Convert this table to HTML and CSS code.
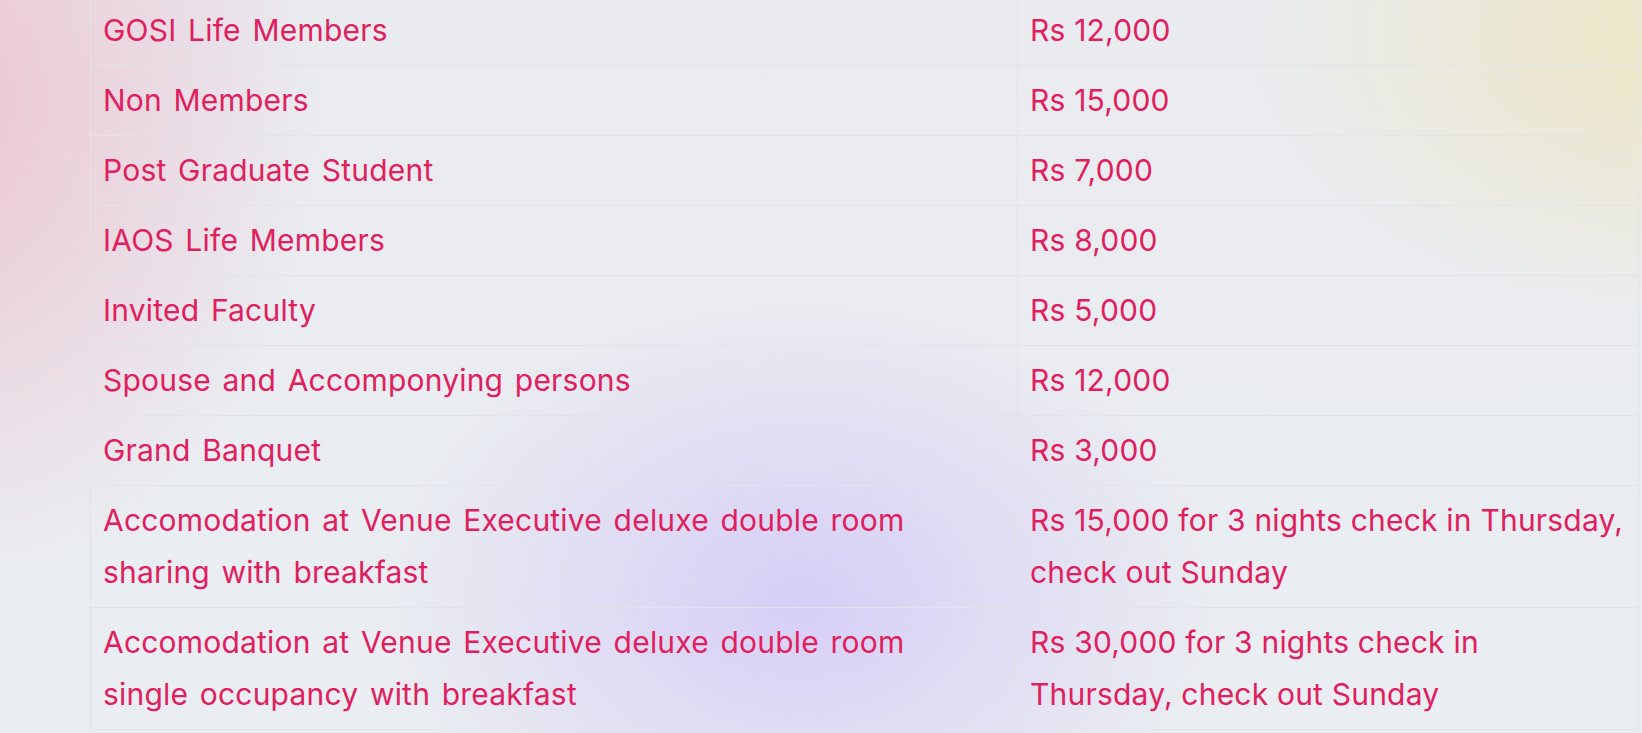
FILE: index.html
```html
<!DOCTYPE html>
<html lang="en">
<head>
<meta charset="utf-8">
<title>Registration Fees</title>
<link rel="stylesheet" href="styles.css">
</head>
<body>
<main class="page">
  <table class="fees">
    <tbody>
      <tr><td class="cat">GOSI Life Members</td><td class="amt">Rs 12,000</td></tr>
      <tr><td class="cat">Non Members</td><td class="amt">Rs 15,000</td></tr>
      <tr><td class="cat">Post Graduate Student</td><td class="amt">Rs 7,000</td></tr>
      <tr><td class="cat">IAOS Life Members</td><td class="amt">Rs 8,000</td></tr>
      <tr><td class="cat">Invited Faculty</td><td class="amt">Rs 5,000</td></tr>
      <tr><td class="cat">Spouse and Accomponying persons</td><td class="amt">Rs 12,000</td></tr>
      <tr><td class="cat">Grand Banquet</td><td class="amt">Rs 3,000</td></tr>
      <tr><td class="cat">Accomodation at Venue Executive deluxe double room<br>sharing with breakfast</td><td class="amt">Rs 15,000 for 3 nights check in Thursday,<br>check out Sunday</td></tr>
      <tr><td class="cat">Accomodation at Venue Executive deluxe double room<br>single occupancy with breakfast</td><td class="amt">Rs 30,000 for 3 nights check in<br>Thursday, check out Sunday</td></tr>
    </tbody>
  </table>
</main>
</body>
</html>
```
FILE: styles.css
```css
html, body {
  margin: 0;
  padding: 0;
  height: 100%;
}
body {
  overflow: hidden;
  font-family: Inter, "Open Sans", sans-serif;
  background-color: #eaedf1;
  background-image:
    radial-gradient(ellipse 420px 300px at 800px 600px, rgba(214, 206, 246, 1), rgba(214, 206, 246, 0) 100%),
    radial-gradient(ellipse 440px 280px at 1690px 40px, rgba(238, 230, 196, 1), rgba(238, 230, 196, 0) 100%),
    radial-gradient(ellipse 380px 480px at -60px 100px, rgba(236, 196, 210, 1), rgba(236, 196, 210, 0) 100%),
    linear-gradient(180deg, #e9ebef 0%, #eaedf1 100%);
}
.page {
  padding: 0 3px 0 90px;
  margin-top: -5px;
}
.fees {
  width: 100%;
  border-collapse: collapse;
  table-layout: fixed;
}
.fees td {
  border: 1px solid #e0e3e8;
  padding: 8px 12px 9px 12px;
  font-size: 30px;
  letter-spacing: 0.2px;
  line-height: 52px;
  color: #e0205e;
  vertical-align: middle;
  white-space: nowrap;
}
.fees td.cat {
  width: 902px;
  word-spacing: 3px;
}
```
